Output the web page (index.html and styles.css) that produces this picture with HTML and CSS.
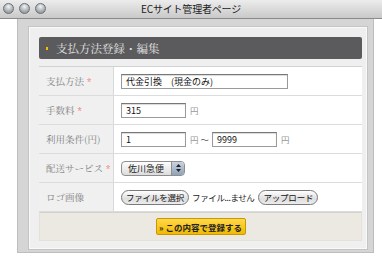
FILE: index.html
```html
<!DOCTYPE html>
<html lang="ja">
<head>
<meta charset="utf-8">
<link rel="stylesheet" href="styles.css">
</head>
<body>
<div class="titlebar">
  <div class="lights">
    <span class="light"></span><span class="light"></span><span class="light"></span>
  </div>
  <div class="wtitle">ECサイト管理者ページ</div>
</div>
<div class="outer">
  <div class="inner">
    <div class="head"><span class="mark"></span>支払方法登録・編集</div>
    <div class="table">
      <div class="row">
        <div class="label">支払方法<span class="req">*</span></div>
        <div class="value"><span class="input w-long">代金引換　(現金のみ)</span></div>
      </div>
      <div class="row">
        <div class="label">手数料<span class="req">*</span></div>
        <div class="value"><span class="input w-short">315</span><span class="unit">円</span></div>
      </div>
      <div class="row">
        <div class="label">利用条件(円)</div>
        <div class="value"><span class="input w-short">1</span><span class="unit">円</span><span class="tilde">～</span><span class="input w-short">9999</span><span class="unit">円</span></div>
      </div>
      <div class="row">
        <div class="label">配送サービス<span class="req">*</span></div>
        <div class="value"><span class="select"><span class="sel-text">佐川急便</span><span class="stepper"><svg width="7" height="10" viewBox="0 0 7 10"><path d="M3.5 1 L6 4 H1Z M3.5 9 L6 6 H1Z" fill="#222"/></svg></span></span></div>
      </div>
      <div class="row">
        <div class="label">ロゴ画像</div>
        <div class="value"><span class="btn">ファイルを選択</span><span class="fname">ファイル...ません</span><span class="btn">アップロード</span></div>
      </div>
    </div>
    <div class="footer"><span class="submit">» この内容で登録する</span></div>
  </div>
</div>
</body>
</html>
```
FILE: styles.css
```css
* { box-sizing: border-box; }
html, body { margin: 0; padding: 0; }
body {
  width: 382px; height: 261px; overflow: hidden;
  background: #fff;
  font-family: "Noto Sans CJK JP", "Liberation Sans", sans-serif;
}
.titlebar {
  height: 19px;
  position: relative;
  display: flex; align-items: center; justify-content: center;
  background: linear-gradient(#ececec, #c9c9c9);
  border-bottom: 1px solid #8a8a8a;
}
.lights { position: absolute; left: 3px; top: 3px; display: flex; gap: 5px; }
.light {
  width: 11px; height: 11px; border-radius: 50%;
  background: radial-gradient(circle at 50% 30%, #f4f4f4 0, #b9bec4 45%, #7d838a 100%);
  border: 1px solid #6b6f74;
}
.wtitle { font-size: 10px; color: #222; line-height: 1; letter-spacing: -0.2px; }
.outer {
  margin: 0 8px 0 17px;
  height: 234px;
  background: #d5d5d5;
  border: 1px solid #bdbdbd; border-top: none;
  padding: 8px 6px 0 11px;
}
.inner {
  background: #efefef;
  border: 1px solid #f9f9f9;
  outline: 1px solid #c4c4c4;
  height: 222px;
  padding: 9px 4px 0 9px;
}
.head {
  height: 22px;
  background: #5b5b5d;
  border-radius: 2px;
  color: #e4e4e4;
  font-family: "Noto Serif CJK JP", "Noto Sans CJK JP", serif;
  font-size: 11.5px;
  display: flex; align-items: center;
  padding-left: 7px;
}
.mark { width: 2px; height: 3px; background: #f0c000; margin-right: 8px; }
.table { margin-top: 7px; border-top: 1px solid #d2d2d2; background: #fff; }
.row { display: flex; height: 29px; border-bottom: 1px solid #dcdcdc; }
.label {
  width: 75px; background: #f0f0f0;
  border-right: 1px solid #d8d8d8;
  font-family: "Noto Serif CJK JP", "Noto Sans CJK JP", serif;
  font-size: 9.5px; color: #838383;
  display: flex; align-items: center; padding-left: 7px;
}
.req { color: #f05050; margin-left: 3px; font-size: 9px; }
.value { flex: 1; display: flex; align-items: center; padding-left: 7px; font-size: 9px; color: #222; }
.input {
  height: 15px; border: 1px solid #9a9a9a; border-top-color: #777;
  background: #fff;
  box-shadow: inset 0 1px 1px rgba(0,0,0,0.15);
  display: flex; align-items: center; padding-left: 4px;
  font-size: 9px; color: #111;
}
.w-long { width: 167px; }
.w-short { width: 65px; }
.unit { color: #999; margin-left: 4px; font-size: 8.5px; }
.tilde { color: #555; margin: 0 3px 0 2px; font-size: 8.5px; }
.select {
  width: 64px; height: 15px; border-radius: 4px;
  border: 1px solid #8e8e8e;
  background: linear-gradient(#fdfdfd, #dcdcdc);
  display: flex; align-items: center; justify-content: space-between;
  overflow: hidden; font-size: 9px;
}
.sel-text { padding-left: 6px; }
.stepper {
  width: 13px; height: 100%;
  background: linear-gradient(#c7d3e0, #8fa2b8);
  border-left: 1px solid #8e8e8e;
  display: flex; align-items: center; justify-content: center;
}
.btn {
  height: 15px; padding: 0 4px;
  border: 1px solid #7a7a7a; border-radius: 8px;
  background: linear-gradient(#ffffff, #dedede 60%, #ececec);
  font-size: 8.5px; display: flex; align-items: center; color: #111;
  letter-spacing: -0.2px;
}
.fname { margin: 0 4px 0 3px; font-size: 8.5px; letter-spacing: -0.4px; }
.footer {
  height: 29px; background: #ebe9e2;
  border: 1px solid #e3e1da; border-top: 1px solid #d4d2cb;
  display: flex; align-items: center; justify-content: center;
}
.submit {
  height: 17px; width: 90px;
  background: linear-gradient(#ffd84a, #f2b900);
  border: 1px solid #c49a00; border-radius: 2px;
  font-size: 8.5px; font-weight: bold; color: #222;
  display: flex; align-items: center; justify-content: center;
}
```
